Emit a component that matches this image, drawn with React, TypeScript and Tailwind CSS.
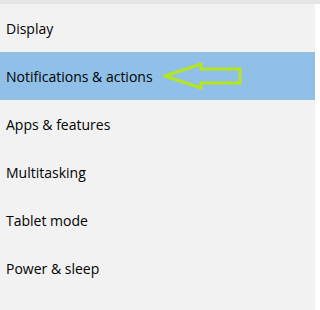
import React from 'react';

const items = [
  'Display',
  'Notifications & actions',
  'Apps & features',
  'Multitasking',
  'Tablet mode',
  'Power & sleep',
];

// arrow drawn on the selected row, pointing at the label
const Arrow = () => (
  <svg width="80" height="28" viewBox="0 0 80 28" className="ml-[10px]">
    <path
      d="M2 14 L38 2 L38 7 L77 7 L77 21 L38 21 L38 26 Z"
      fill="none"
      stroke="#b5e61d"
      strokeWidth="3"
      strokeLinejoin="miter"
    />
  </svg>
);

export default function App() {
  return (
    <div className="w-[320px] h-[310px] bg-white flex flex-col overflow-hidden" style={{ fontFamily: '"Open Sans", "Noto Sans", sans-serif' }}>
      <div className="h-[4px] bg-[#e6e6e6] shrink-0" />
      <div className="flex flex-1">
        <ul className="w-[315px] bg-[#f2f2f2]">
          {items.map((label, i) => (
            <li
              key={label}
              className={`h-[48px] flex items-center pl-[6px] text-[14px] text-black ${i === 1 ? 'bg-[#90c0e8]' : ''}`}
            >
              <span>{label}</span>
              {i === 1 && <Arrow />}
            </li>
          ))}
        </ul>
        <div className="flex-1 bg-white" />
      </div>
    </div>
  );
}
